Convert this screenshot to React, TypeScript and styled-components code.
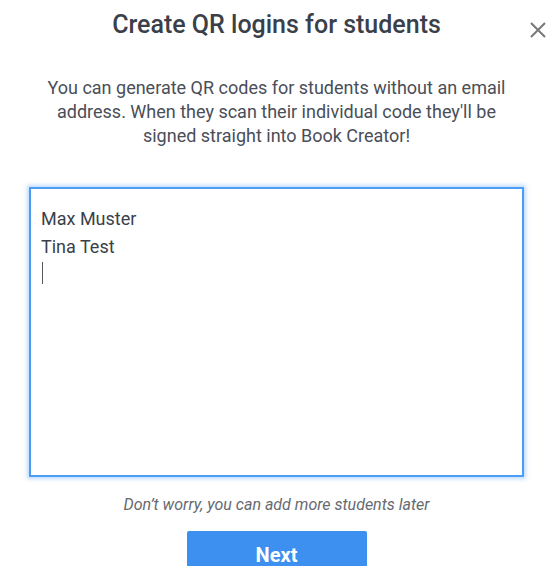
import React, { useEffect, useRef } from "react";
import styled, { createGlobalStyle } from "styled-components";

const Global = createGlobalStyle`
  html, body { margin: 0; padding: 0; background: #ffffff; }
  body { font-family: Roboto, "Noto Sans", Arial, sans-serif; overflow: hidden; }
  * { box-sizing: border-box; }
`;

const Modal = styled.div`
  position: relative;
  width: 558px;
  padding: 11px 5px 0 0;
  display: flex;
  flex-direction: column;
  align-items: center;
`;

const Title = styled.h1`
  margin: 0;
  font-size: 25px;
  line-height: 28px;
  font-weight: 500;
  color: #3b3f4a;
  text-align: center;
`;

const CloseButton = styled.button`
  position: absolute;
  top: 20px;
  right: 10px;
  width: 20px;
  height: 20px;
  padding: 0;
  border: none;
  background: transparent;
  display: flex;
  align-items: center;
  justify-content: center;
  cursor: pointer;
`;

const Description = styled.p`
  margin: 37px 0 0;
  width: 480px;
  font-size: 18px;
  line-height: 24px;
  color: #4a4e58;
  text-align: center;
`;

const Field = styled.div`
  position: relative;
  margin-top: 39px;
  width: 495px;
  height: 290px;
  flex-shrink: 0;
`;

const Names = styled.textarea`
  display: block;
  width: 100%;
  height: 100%;
  padding: 16px 10px;
  border: 2px solid #4a9cf5;
  border-radius: 0;
  box-shadow: 0 0 4px 2px rgba(74, 156, 245, 0.35);
  outline: none;
  resize: none;
  font-family: Roboto, "Noto Sans", Arial, sans-serif;
  font-size: 18px;
  line-height: 28px;
  color: #3b3f4a;
  caret-color: transparent;
`;

const Caret = styled.span`
  position: absolute;
  left: 13px;
  top: 75px;
  width: 1px;
  height: 22px;
  background: #555a60;
  pointer-events: none;
`;

const Hint = styled.p`
  margin: 18px 0 0;
  font-size: 16px;
  line-height: 20px;
  font-style: italic;
  color: #666a70;
  text-align: center;
`;

const NextButton = styled.button`
  margin-top: 16px;
  width: 180px;
  height: 48px;
  flex-shrink: 0;
  border: none;
  border-radius: 2px;
  background: #3d8ff0;
  color: #ffffff;
  font-family: Roboto, "Noto Sans", Arial, sans-serif;
  font-size: 20px;
  font-weight: 700;
  cursor: pointer;
`;

export default function App() {
  const ref = useRef<HTMLTextAreaElement>(null);
  useEffect(() => {
    const el = ref.current;
    if (el) {
      el.focus();
      const len = el.value.length;
      el.setSelectionRange(len, len);
    }
  }, []);
  return (
    <>
      <Global />
      <Modal>
        <Title>Create QR logins for students</Title>
        <CloseButton aria-label="Close">
          <svg width="16" height="16" viewBox="0 0 16 16">
            <path d="M1 1 L15 15 M15 1 L1 15" stroke="#777" strokeWidth="2" fill="none" />
          </svg>
        </CloseButton>
        <Description>
          You can generate QR codes for students without an email address. When they scan their
          individual code they'll be signed straight into Book Creator!
        </Description>
        <Field>
          <Names ref={ref} defaultValue={"Max Muster\nTina Test\n"} />
          <Caret />
        </Field>
        <Hint>Don’t worry, you can add more students later</Hint>
        <NextButton>Next</NextButton>
      </Modal>
    </>
  );
}
